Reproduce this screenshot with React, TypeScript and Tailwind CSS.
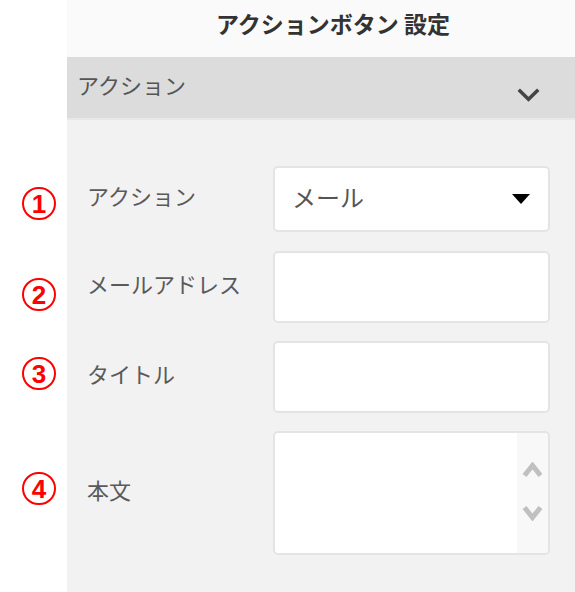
const rows = [
  { label: "アクション", h: "h-[66px]", mt: "mt-[46px]", kind: "select" },
  { label: "メールアドレス", h: "h-[72px]", mt: "mt-[19px]", kind: "input" },
  { label: "タイトル", h: "h-[72px]", mt: "mt-[18px]", kind: "input" },
  { label: "本文", h: "h-[124px]", mt: "mt-[18px]", kind: "textarea" },
];

// red annotation marks over the screenshot
const marks = [
  { n: "1", top: "top-[187px]" },
  { n: "2", top: "top-[278px]" },
  { n: "3", top: "top-[357px]" },
  { n: "4", top: "top-[472px]" },
];

function Chevron({ up, w, h, sw, color }: { up?: boolean; w: number; h: number; sw: number; color: string }) {
  const pts = up
    ? `${sw / 2},${h - sw / 2} ${w / 2},${sw / 2 + 1} ${w - sw / 2},${h - sw / 2}`
    : `${sw / 2},${sw / 2} ${w / 2},${h - sw / 2 - 1} ${w - sw / 2},${sw / 2}`;
  return (
    <svg width={w} height={h} viewBox={`0 0 ${w} ${h}`}>
      <polyline points={pts} fill="none" stroke={color} strokeWidth={sw} />
    </svg>
  );
}

function Field({ kind, h }: { kind: string; h: string }) {
  const box = `w-[277px] ${h} rounded-[5px] border-2 border-[#e4e4e4] bg-white`;

  if (kind === "select") {
    return (
      <div className={`${box} flex items-center justify-between pl-[17px] pr-[18px]`}>
        <span className="pb-[5px] text-[24px] text-[#555]">メール</span>
        <svg width="18" height="10" viewBox="0 0 18 10">
          <polygon points="0,0 18,0 9,10" fill="#000" />
        </svg>
      </div>
    );
  }

  if (kind === "textarea") {
    return (
      <div className={`${box} flex justify-end overflow-hidden`}>
        <div className="w-[31px] h-full bg-[#f8f8f8] flex flex-col items-center justify-center gap-[27px] pb-[4px] pr-[1px]">
          <Chevron up w={21} h={16} sw={5} color="#c0c0c0" />
          <Chevron w={21} h={16} sw={5} color="#c0c0c0" />
        </div>
      </div>
    );
  }

  return <div className={box} />;
}

export default function App() {
  return (
    <div className="relative flex w-[575px] h-[592px] bg-white overflow-hidden font-['Noto_Sans_CJK_JP',sans-serif]">
      <div className="w-[67px] shrink-0 bg-white" />

      <div className="flex-1 flex flex-col bg-[#f2f2f2]">
        <div className="h-[57px] bg-[#fafafa] flex items-center justify-center pl-[24px] pb-[10px] text-[23px] font-bold text-[#333]">
          アクションボタン 設定
        </div>

        <div className="h-[63px] bg-[#dcdcdc] border-b-2 border-[#e8e8e8] flex justify-between pl-[10px] pr-[35px]">
          <span className="mt-[11px] text-[22px] text-[#555]">アクション</span>
          <div className="mt-[31px]">
            <Chevron w={23} h={14} sw={3.5} color="#444" />
          </div>
        </div>

        {rows.map((row) => (
          <div key={row.label} className={`flex items-center ${row.mt}`}>
            <span className="w-[206px] pl-[20px] pb-[8px] text-[22px] text-[#5a5a5a]">{row.label}</span>
            <Field kind={row.kind} h={row.h} />
          </div>
        ))}
      </div>

      {marks.map((m) => (
        <span
          key={m.n}
          className={`absolute left-[22px] ${m.top} w-[34px] h-[33px] rounded-full border-[2.5px] border-[#ff0000] flex items-center justify-center font-['Liberation_Sans',sans-serif] text-[26px] leading-none font-bold text-[#ff0000]`}
        >
          {m.n}
        </span>
      ))}
    </div>
  );
}
